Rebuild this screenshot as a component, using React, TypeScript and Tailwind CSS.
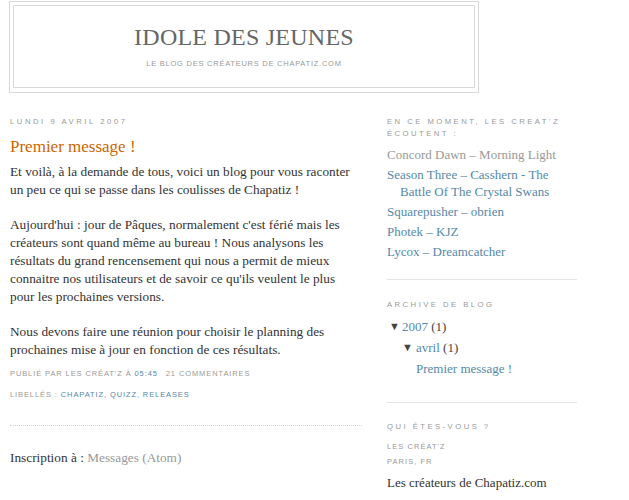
import React from "react";

const serif = { fontFamily: '"Liberation Serif", "Times New Roman", serif' };
const sans = { fontFamily: '"Liberation Sans", Arial, sans-serif' };

function SideHeading({ children }: { children: React.ReactNode }) {
  return (
    <h2
      style={sans}
      className="text-[7.7px] leading-[12px] tracking-[0.32em] uppercase text-[#999]"
    >
      {children}
    </h2>
  );
}

export default function App() {
  return (
    <div className="w-[629px] h-[500px] bg-white overflow-hidden" style={serif}>
      {/* Header */}
      <div className="ml-[9px] mt-[1px] w-[470px] h-[92px] border border-[#d8d8d8] pt-[3px] px-[3px]">
        <div className="h-[83px] border border-[#d8d8d8] flex flex-col items-center">
          <h1
            style={{ fontFamily: '"Liberation Serif", Georgia, serif' }}
            className="mt-[17px] text-[24px] leading-[28px] tracking-[0.01em] text-[#666]"
          >
            IDOLE DES JEUNES
          </h1>
          <p
            style={sans}
            className="mt-[8px] text-[7.5px] leading-[10px] tracking-[0.1em] text-[#999]"
          >
            LE BLOG DES CRÉATEURS DE CHAPATIZ.COM
          </p>
        </div>
      </div>

      <div className="flex">
        {/* Main column */}
        <div className="ml-[10px] w-[352px]">
          <h2
            style={sans}
            className="mt-[23px] text-[7.7px] leading-[12px] tracking-[0.33em] text-[#999]"
          >
            LUNDI 9 AVRIL 2007
          </h2>
          <h3 className="mt-[9px] text-[17px] leading-[20px] text-[#cc6600]">Premier message !</h3>
          <div className="mt-[6px] text-[13.3px] leading-[17.8px] text-[#333]">
            Et voilà, à la demande de tous, voici un blog pour vous raconter un peu ce qui se passe
            dans les coulisses de Chapatiz !
            <br />
            <br />
            Aujourd'hui : jour de Pâques, normalement c'est férié mais les créateurs sont quand même
            au bureau ! Nous analysons les résultats du grand rencensement qui nous a permit de mieux
            connaitre nos utilisateurs et de savoir ce qu'ils veulent le plus pour les prochaines
            versions.
            <br />
            <br />
            Nous devons faire une réunion pour choisir le planning des prochaines mise à jour en
            fonction de ces résultats.
          </div>
          <p
            style={sans}
            className="mt-[9px] text-[7.5px] leading-[12px] tracking-[0.12em] text-[#999]"
          >
            PUBLIÉ PAR LES CRÉAT'Z À <span className="text-[#5588aa]">05:45</span>
            <span className="ml-[8px]">21 COMMENTAIRES</span>
          </p>
          <p
            style={sans}
            className="mt-[9px] text-[7.5px] leading-[12px] tracking-[0.12em] text-[#999]"
          >
            LIBELLÉS : <span className="text-[#5588aa]">CHAPATIZ, QUIZZ, RELEASES</span>
          </p>
          <div className="mt-[24px] border-b border-dotted border-[#d5d5d5]" />
          <p className="mt-[23px] text-[13.3px] leading-[18px] text-[#333]">
            Inscription à : <span className="text-[#999]">Messages (Atom)</span>
          </p>
        </div>

        {/* Sidebar */}
        <div className="ml-[25px] w-[190px]">
          <div className="mt-[23px]">
            <SideHeading>EN CE MOMENT, LES CREAT'Z ÉCOUTENT :</SideHeading>
            <ul className="mt-[6px] text-[13px] leading-[17px] text-[#5588aa]">
              <li className="pl-[13px] -indent-[13px] text-[#999]">Concord Dawn – Morning Light</li>
              <li className="mt-[3px] pl-[13px] -indent-[13px]">Season Three – Casshern - The Battle Of The Crystal Swans</li>
              <li className="mt-[3px] pl-[13px] -indent-[13px]">Squarepusher – obrien</li>
              <li className="mt-[3px] pl-[13px] -indent-[13px]">Photek – KJZ</li>
              <li className="mt-[3px] pl-[13px] -indent-[13px]">Lycox – Dreamcatcher</li>
            </ul>
          </div>
          <div className="mt-[19px] border-t border-[#e5e5e5]" />
          <div className="mt-[19px]">
            <SideHeading>ARCHIVE DE BLOG</SideHeading>
            <div className="mt-[5px] text-[13px] text-[#5588aa]">
              <div className="flex items-center h-[21px]">
                <span className="w-[15px] pl-[2px] text-[11px] leading-[13px] text-[#444]">▼</span>
                <span>2007&nbsp;<span className="text-[#444]">(1)</span></span>
              </div>
              <div className="flex items-center h-[21px] pl-[15px]">
                <span className="w-[14px] text-[11px] leading-[13px] text-[#444]">▼</span>
                <span>avril&nbsp;<span className="text-[#444]">(1)</span></span>
              </div>
              <div className="flex items-center h-[21px] pl-[29px]">Premier message !</div>
            </div>
          </div>
          <div className="mt-[23px] border-t border-[#e5e5e5]" />
          <div className="mt-[18px]">
            <SideHeading>QUI ÊTES-VOUS ?</SideHeading>
            <p
              style={sans}
              className="mt-[6px] text-[7.5px] leading-[15px] tracking-[0.14em] text-[#999]"
            >
              LES CRÉAT'Z
              <br />
              PARIS, FR
            </p>
            <p className="mt-[5px] text-[13px] leading-[18px] text-[#333]">Les créateurs de Chapatiz.com</p>
          </div>
        </div>
      </div>
    </div>
  );
}
